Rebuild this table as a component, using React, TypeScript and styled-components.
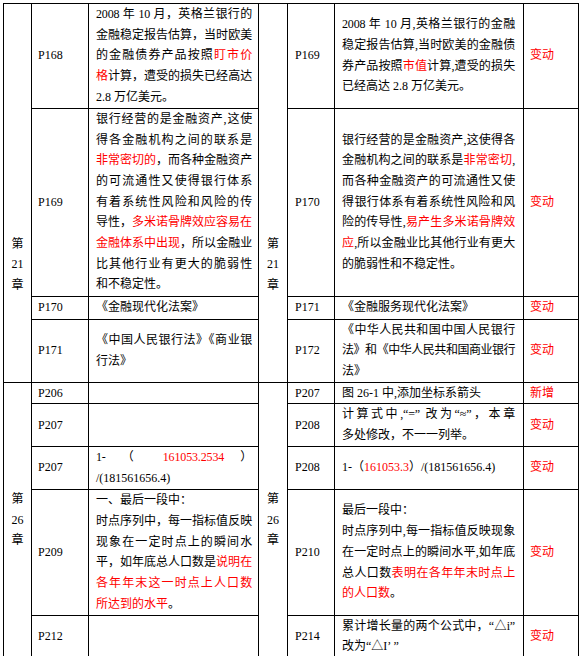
import React from "react";
import styled, { createGlobalStyle } from "styled-components";

const GlobalStyle = createGlobalStyle`
  html, body {
    margin: 0;
    padding: 0;
    background: #fff;
  }
  body {
    font-family: "Liberation Serif", "Noto Sans CJK SC", serif;
    color: #000;
  }
`;

type Para = string[];

interface RowData {
  h: number;
  leftPage: string;
  left: Para[];
  rightPage: string;
  right: Para[];
  status?: string;
}

// {...} marks red text, a leading ~ squeezes the line a little
const rows: RowData[] = [
  {
    h: 104,
    leftPage: "P168",
    left: [
      [
        "2008 年 10 月，英格兰银行的",
        "金融稳定报告估算，当时欧美",
        "的金融债券产品按照{盯市价}",
        "{格}计算，遭受的损失已经高达",
        "2.8 万亿美元。",
      ],
    ],
    rightPage: "P169",
    right: [
      [
        "2008 年 10 月,英格兰银行的金融",
        "稳定报告估算,当时欧美的金融债",
        "券产品按照{市值}计算,遭受的损失",
        "已经高达 2.8 万亿美元。",
      ],
    ],
    status: "变动",
  },
  {
    h: 188,
    leftPage: "P169",
    left: [
      [
        "银行经营的是金融资产,这使",
        "得各金融机构之间的联系是",
        "{非常密切的}，而各种金融资产",
        "的可流通性又使得银行体系",
        "有着系统性风险和风险的传",
        "导性，{多米诺骨牌效应容易在}",
        "{金融体系中出现}，所以金融业",
        "比其他行业有更大的脆弱性",
        "和不稳定性。",
      ],
    ],
    rightPage: "P170",
    right: [
      [
        "银行经营的是金融资产,这使得各",
        "金融机构之间的联系是{非常密切},",
        "而各种金融资产的可流通性又使",
        "得银行体系有着系统性风险和风",
        "险的传导性,{易产生多米诺骨牌效}",
        "{应},所以金融业比其他行业有更大",
        "的脆弱性和不稳定性。",
      ],
    ],
    status: "变动",
  },
  {
    h: 23,
    leftPage: "P170",
    left: [["《金融现代化法案》"]],
    rightPage: "P171",
    right: [["《金融服务现代化法案》"]],
    status: "变动",
  },
  {
    h: 63,
    leftPage: "P171",
    left: [["《中国人民银行法》《商业银", "行法》"]],
    rightPage: "P172",
    right: [["《中华人民共和国中国人民银行", "~法》和《中华人民共和国商业银行", "法》"]],
    status: "变动",
  },
  {
    h: 21,
    leftPage: "P206",
    left: [],
    rightPage: "P207",
    right: [["图 26-1 中,添加坐标系箭头"]],
    status: "新增",
  },
  {
    h: 41,
    leftPage: "P207",
    left: [],
    rightPage: "P208",
    right: [["计算式中,“=” 改为“≈”，本章", "多处修改，不一一列举。"]],
    status: "变动",
  },
  {
    h: 43,
    leftPage: "P207",
    left: [["1- （ {161053.2534} ）", "/(181561656.4)"]],
    rightPage: "P208",
    right: [["1-（{161053.3}）/(181561656.4)"]],
    status: "变动",
  },
  {
    h: 126,
    leftPage: "P209",
    left: [
      ["一、最后一段中："],
      [
        "时点序列中，每一指标值反映",
        "现象在一定时点上的瞬间水",
        "平，如年底总人口数是{说明在}",
        "{各年年末这一时点上人口数}",
        "{所达到的水平}。",
      ],
    ],
    rightPage: "P210",
    right: [
      ["最后一段中："],
      [
        "时点序列中,每一指标值反映现象",
        "在一定时点上的瞬间水平,如年底",
        "总人口数{表明在各年年末时点上}",
        "{的人口数}。",
      ],
    ],
    status: "变动",
  },
  {
    h: 41,
    leftPage: "P212",
    left: [],
    rightPage: "P214",
    right: [["累计增长量的两个公式中，“△i”", "改为“△I’ ”"]],
    status: "变动",
  },
];

const chapters = [
  { start: 0, span: 4, num: "21", shift: 144 },
  { start: 4, span: 5, num: "26", shift: 0 },
];

function renderLine(line: string) {
  return line
    .split(/(\{[^}]*\})/)
    .filter(Boolean)
    .map((seg, i) =>
      seg.startsWith("{") ? (
        <Red key={i}>{seg.slice(1, -1)}</Red>
      ) : (
        <React.Fragment key={i}>{seg}</React.Fragment>
      )
    );
}

function Text({ paras }: { paras: Para[] }) {
  return (
    <>
      {paras.map((p, pi) =>
        p.map((raw, li) => {
          const tight = raw.startsWith("~");
          const line = tight ? raw.slice(1) : raw;
          return (
            <Line key={`${pi}-${li}`} $last={li === p.length - 1} $tight={tight}>
              {renderLine(line)}
            </Line>
          );
        })
      )}
    </>
  );
}

function Chapter({ num, span, shift }: { num: string; span: number; shift: number }) {
  return (
    <ChapterCell rowSpan={span} $shift={shift}>
      <div>第</div>
      <div>{num}</div>
      <div>章</div>
    </ChapterCell>
  );
}

export default function App() {
  return (
    <>
      <GlobalStyle />
      <Page>
        <Table>
          <colgroup>
            <Col $w={28} />
            <Col $w={57} />
            <Col $w={170} />
            <Col $w={29} />
            <Col $w={47} />
            <Col $w={189} />
            <Col $w={55} />
          </colgroup>
          <tbody>
            {rows.map((r, i) => {
              const ch = chapters.find((c) => c.start === i);
              return (
                <Row key={i} $h={r.h}>
                  {ch && <Chapter num={ch.num} span={ch.span} shift={ch.shift} />}
                  <PageCell $pad={6}>{r.leftPage}</PageCell>
                  <TextCell $l={7} $r={6}>
                    <Text paras={r.left} />
                  </TextCell>
                  {ch && <Chapter num={ch.num} span={ch.span} shift={ch.shift} />}
                  <PageCell $pad={7}>{r.rightPage}</PageCell>
                  <TextCell $l={7} $r={8}>
                    <Text paras={r.right} />
                  </TextCell>
                  <StatusCell>{r.status}</StatusCell>
                </Row>
              );
            })}
          </tbody>
        </Table>
      </Page>
    </>
  );
}

const Page = styled.div`
  width: 583px;
  height: 656px;
  overflow: hidden;
  padding: 3px 0 0 3px;
  box-sizing: border-box;
`;

const Table = styled.table`
  border-collapse: collapse;
  table-layout: fixed;
  width: 576px;
  font-size: 12px;
  line-height: 20.7px;
`;

const Col = styled.col<{ $w: number }>`
  width: ${(p) => p.$w}px;
`;

const Row = styled.tr<{ $h: number }>`
  height: ${(p) => p.$h}px;
`;

const Td = styled.td`
  border: 1px solid #000;
  padding: 0;
  vertical-align: middle;
  overflow: hidden;
`;

const ChapterCell = styled(Td)<{ $shift: number }>`
  text-align: center;
  padding-top: ${(p) => p.$shift}px;
`;

const PageCell = styled(Td)<{ $pad: number }>`
  padding-left: ${(p) => p.$pad}px;
`;

const TextCell = styled(Td)<{ $l: number; $r: number }>`
  padding-left: ${(p) => p.$l}px;
  padding-right: ${(p) => p.$r}px;
`;

const StatusCell = styled(Td)`
  padding-left: 6px;
  color: #ff0000;
`;

const Line = styled.span<{ $last: boolean; $tight: boolean }>`
  display: block;
  white-space: nowrap;
  text-align: justify;
  text-align-last: ${(p) => (p.$last ? "left" : "justify")};
  letter-spacing: ${(p) => (p.$tight ? "-0.6px" : p.$last ? "0" : "-0.15px")};
`;

const Red = styled.span`
  color: #ff0000;
`;
